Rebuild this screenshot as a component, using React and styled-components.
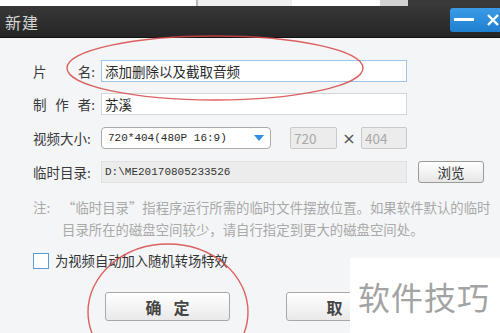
import React from "react";
import styled, { createGlobalStyle } from "styled-components";

const Global = createGlobalStyle`
  html, body { margin: 0; padding: 0; width: 500px; height: 333px; overflow: hidden; background: #f4f5f7; }
  body { font-family: "Noto Sans CJK SC", "Noto Sans", sans-serif; }
  * { box-sizing: border-box; }
`;

const Page = styled.div`
  position: relative;
  width: 500px;
  height: 333px;
  overflow: hidden;
  background: #f4f5f7;
`;

const TopStrip = styled.div`
  height: 6px;
  display: flex;
`;

const StripSeg = styled.div`
  width: ${(p) => p.$w}px;
  flex: ${(p) => (p.$grow ? 1 : "none")};
  background: ${(p) => p.$bg};
  border-right: ${(p) => (p.$line ? "2px solid #b9b9b9" : "none")};
`;

const TitleBar = styled.div`
  height: 32px;
  display: flex;
  align-items: center;
  justify-content: space-between;
  background: linear-gradient(#383838, #252525);
  border-bottom: 1px solid #111;
  padding-left: 5px;
`;

const Title = styled.div`
  color: #d6d6d6;
  font-size: 16px;
  letter-spacing: 1px;
`;

const WinButtons = styled.div`
  display: flex;
  height: 24px;
  align-self: flex-start;
  margin-top: 2px;
  margin-right: -8px;
`;

const WinButton = styled.div`
  width: ${(p) => p.$w}px;
  height: 24px;
  display: flex;
  align-items: center;
  justify-content: ${(p) => (p.$left ? "flex-start" : "center")};
  padding-left: ${(p) => (p.$left ? 4 : 0)}px;
  background: linear-gradient(#3c9be6, #1f7fd0);
  border-radius: ${(p) => (p.$first ? "3px 0 0 3px" : "0")};
  color: #fff;
`;

const Content = styled.div`
  padding: 22px 0 0 33px;
  display: flex;
  flex-direction: column;
`;

const Row = styled.div`
  display: flex;
  align-items: center;
  height: 22px;
  margin-bottom: ${(p) => p.$mb}px;
`;

const Label = styled.div`
  width: 62px;
  margin-right: 6px;
  display: flex;
  justify-content: space-between;
  font-size: 13.5px;
  color: #3a3a3a;
  white-space: nowrap;
`;

const TextBox = styled.div`
  width: ${(p) => p.$w}px;
  height: 22px;
  display: flex;
  align-items: center;
  padding-left: ${(p) => p.$pl || 3}px;
  margin-left: ${(p) => p.$ml || 0}px;
  background: ${(p) => (p.$disabled ? "#ececec" : "#fff")};
  border: 1px solid ${(p) => p.$border || "#d6d6d6"};
  border-radius: ${(p) => p.$radius || 0}px;
  font-size: ${(p) => (p.$mono ? "11px" : "13.5px")};
  font-family: ${(p) =>
    p.$mono ? '"Liberation Mono", "DejaVu Sans Mono", monospace' : '"Noto Sans CJK SC", sans-serif'};
  color: ${(p) => p.$color || "#2a2a2a"};
  white-space: nowrap;
  overflow: hidden;
`;

const Select = styled(TextBox)`
  justify-content: space-between;
  padding: 0 6px 0 6px;
`;

const Caret = styled.div`
  width: 0;
  height: 0;
  border-left: 5px solid transparent;
  border-right: 5px solid transparent;
  border-top: 6px solid #2f8fe0;
`;

const Times = styled.div`
  width: 24px;
  text-align: center;
  font-size: 16px;
  color: #555;
  font-family: "DejaVu Sans", sans-serif;
`;

const SmallButton = styled.div`
  width: 66px;
  height: 22px;
  margin-left: 11px;
  display: flex;
  align-items: center;
  justify-content: center;
  font-size: 13.5px;
  color: #333;
  border: 1px solid #9a9a9a;
  border-radius: 3px;
  background: linear-gradient(#ffffff, #e6e6e6);
`;

const Note = styled.div`
  display: flex;
  margin-top: 13px;
  font-size: 13.4px;
  line-height: 22px;
  color: #a9a9a9;
`;

const NoteHead = styled.div`
  width: 29px;
  flex: none;
`;

const NoteBody = styled.div`
  width: 430px;
`;

const CheckRow = styled.div`
  display: flex;
  align-items: center;
  margin-top: 11px;
  font-size: 13.3px;
  color: #333;
`;

const Check = styled.div`
  width: 16px;
  height: 16px;
  border: 1px solid #5b9bd8;
  background: #fff;
  margin-right: 6px;
`;

const ButtonRow = styled.div`
  display: flex;
  width: 245px;
  overflow: hidden;
  margin-top: 22px;
  margin-left: 72px;
  gap: 56px;
`;

const BigButton = styled.div`
  flex: none;
  width: 125px;
  height: 29px;
  display: flex;
  align-items: center;
  justify-content: center;
  font-size: 16px;
  font-weight: bold;
  letter-spacing: 12px;
  padding-left: 12px;
  color: #444;
  border: 1px solid #a8a8a8;
  border-radius: 3px;
  background: linear-gradient(#ffffff, #e9e9e9);
`;

const Watermark = styled.div`
  position: absolute;
  left: 350px;
  top: 258px;
  width: 150px;
  height: 75px;
  background: #fff;
  display: flex;
  align-items: center;
  padding-left: 8px;
  font-size: 32px;
  color: #a3a3a3;
  letter-spacing: 1px;
  white-space: nowrap;
`;

const Overlay = styled.svg`
  position: absolute;
  left: 0;
  top: 0;
  pointer-events: none;
`;

export default function App() {
  return (
    <Page>
      <Global />
      <TopStrip>
        <StripSeg $w={198} $bg="#ffffff" $line />
        <StripSeg $w={94} $bg="#efefef" />
        <StripSeg $w={88} $bg="#ffffff" />
        <StripSeg $w={28} $bg="#d2d2d2" />
        <StripSeg $grow $bg="#3a3a3a" />
      </TopStrip>
      <TitleBar>
        <Title>新建</Title>
        <WinButtons>
          <WinButton $w={27} $first $left>
            <svg width="20" height="4" viewBox="0 0 20 4">
              <rect x="0" y="0" width="20" height="3" fill="#fff" />
            </svg>
          </WinButton>
          <WinButton $w={31}>
            <svg width="14" height="14" viewBox="0 0 14 14">
              <path d="M2 2 L12 12 M12 2 L2 12" stroke="#fff" strokeWidth="2.4" />
            </svg>
          </WinButton>
        </WinButtons>
      </TitleBar>
      <Content>
        <Row $mb={11}>
          <Label>
            <span>片</span>
            <span>名:</span>
          </Label>
          <TextBox $w={306} $border="#9ec4e8">添加删除以及截取音频</TextBox>
        </Row>
        <Row $mb={12}>
          <Label>
            <span>制</span>
            <span>作</span>
            <span>者:</span>
          </Label>
          <TextBox $w={306}>苏溪</TextBox>
        </Row>
        <Row $mb={12}>
          <Label>
            <span>视频大小:</span>
          </Label>
          <Select $w={170} $mono $border="#a9a9a9" $radius={4}>
            <span>720*404(480P 16:9)</span>
            <Caret />
          </Select>
          <TextBox $w={47} $ml={19} $disabled $border="#c9c9c9" $color="#a8a8a8" $radius={2}>
            720
          </TextBox>
          <Times>×</Times>
          <TextBox $w={46} $disabled $border="#c9c9c9" $color="#a8a8a8" $radius={2}>
            404
          </TextBox>
        </Row>
        <Row $mb={0}>
          <Label>
            <span>临时目录:</span>
          </Label>
          <TextBox $w={306} $disabled $mono $border="#e0e0e0" $color="#333">
            D:\ME20170805233526
          </TextBox>
          <SmallButton>浏览</SmallButton>
        </Row>
        <Note>
          <NoteHead>注:</NoteHead>
          <NoteBody>
            “临时目录”指程序运行所需的临时文件摆放位置。如果软件默认的临时
            目录所在的磁盘空间较少，请自行指定到更大的磁盘空间处。
          </NoteBody>
        </Note>
        <CheckRow>
          <Check />
          <span>为视频自动加入随机转场特效</span>
        </CheckRow>
        <ButtonRow>
          <BigButton>确定</BigButton>
          <BigButton>取消</BigButton>
        </ButtonRow>
      </Content>
      <Watermark>软件技巧</Watermark>
      <Overlay width="500" height="333" viewBox="0 0 500 333">
        <ellipse cx="215" cy="68" rx="148" ry="32" fill="none" stroke="rgba(214,70,70,0.85)" strokeWidth="1.4" />
        <ellipse cx="168" cy="312" rx="80" ry="68" fill="none" stroke="rgba(214,70,70,0.85)" strokeWidth="1.4" />
      </Overlay>
    </Page>
  );
}
